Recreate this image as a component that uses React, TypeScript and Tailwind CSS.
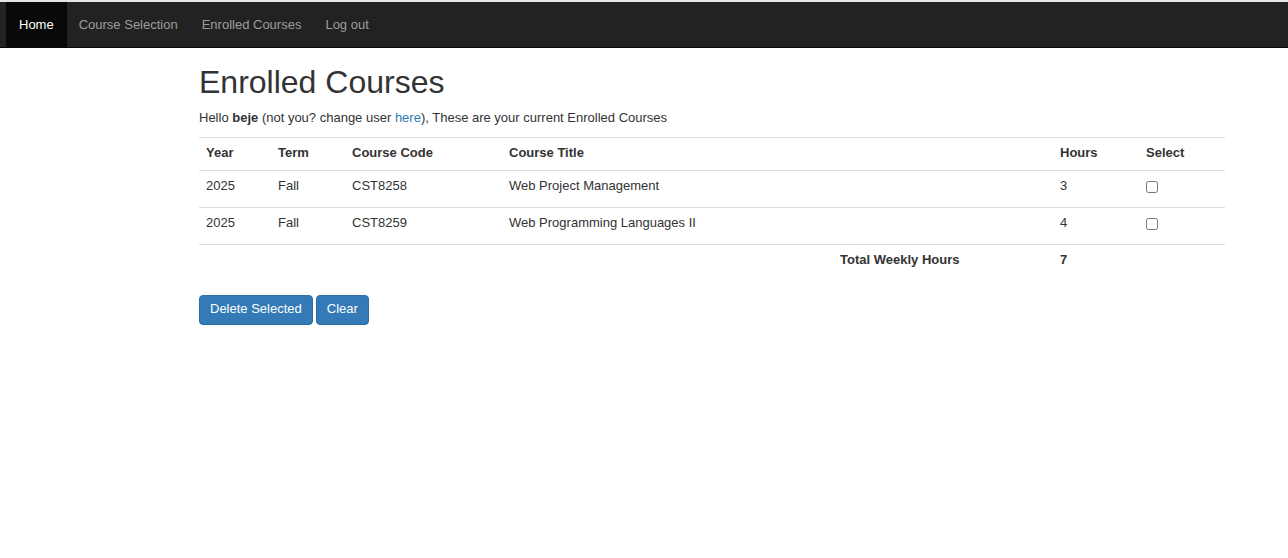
import { useState } from "react";

const links = ["Home", "Course Selection", "Enrolled Courses", "Log out"];

const courses = [
  { year: 2025, term: "Fall", code: "CST8258", title: "Web Project Management", hours: 3 },
  { year: 2025, term: "Fall", code: "CST8259", title: "Web Programming Languages II", hours: 4 },
];

const cell = "border-t border-[#dddddd] px-[7px] pt-[6px] align-top";
const button =
  "h-[30px] rounded-[4px] border border-[#2e6da4] bg-[#337ab7] px-[10px] pb-[2px] leading-[18px] text-white hover:bg-[#286090]";

export default function App() {
  const [selected, setSelected] = useState<string[]>([]);

  const toggle = (code: string) =>
    setSelected((prev) => (prev.includes(code) ? prev.filter((c) => c !== code) : [...prev, code]));

  const total = courses.reduce((sum, c) => sum + c.hours, 0);

  return (
    <div className="min-h-screen bg-white font-['Liberation_Sans',Arial,sans-serif] text-[13px] leading-[18px] text-[#333333]">
      <nav className="border-t-2 border-b border-t-[#e4e6e8] border-b-[#080808] bg-[#222222] px-[6px]">
        <ul className="flex">
          {links.map((label, i) => (
            <li key={label}>
              <a
                href="#"
                className={
                  i === 0
                    ? "block bg-[#080808] px-[13px] pt-[14px] pb-[13px] text-white"
                    : "block px-3 pt-[14px] pb-[13px] text-[#9d9d9d] hover:text-white"
                }
              >
                {label}
              </a>
            </li>
          ))}
        </ul>
      </nav>

      <main className="pt-4 pr-[63px] pl-[199px]">
        <h1 className="text-[32px] leading-9">Enrolled Courses</h1>
        <p className="mt-[9px]">
          Hello <b>beje</b> (not you? change user{" "}
          <a href="#" className="text-[#337ab7] hover:underline">
            here
          </a>
          ), These are your current Enrolled Courses
        </p>

        <table className="mt-[10px] w-full table-fixed border-separate border-spacing-0 text-left">
          <colgroup>
            <col className="w-[72px]" />
            <col className="w-[74px]" />
            <col className="w-[157px]" />
            <col className="w-[331px]" />
            <col className="w-[220px]" />
            <col className="w-[86px]" />
            <col className="w-[86px]" />
          </colgroup>
          <thead>
            <tr className="h-[33px]">
              <th className={cell}>Year</th>
              <th className={cell}>Term</th>
              <th className={cell}>Course Code</th>
              <th className={cell} colSpan={2}>
                Course Title
              </th>
              <th className={cell}>Hours</th>
              <th className={cell}>Select</th>
            </tr>
          </thead>
          <tbody>
            {courses.map((c) => (
              <tr key={c.code} className="h-[37px]">
                <td className={cell}>{c.year}</td>
                <td className={cell}>{c.term}</td>
                <td className={cell}>{c.code}</td>
                <td className={cell} colSpan={2}>
                  {c.title}
                </td>
                <td className={cell}>{c.hours}</td>
                <td className={cell}>
                  <input
                    type="checkbox"
                    aria-label={`Select ${c.code}`}
                    checked={selected.includes(c.code)}
                    onChange={() => toggle(c.code)}
                    className="mt-1 block size-3"
                  />
                </td>
              </tr>
            ))}
            <tr className="h-[33px] font-bold">
              <td className={cell} colSpan={4}></td>
              <td className={cell}>Total Weekly Hours</td>
              <td className={cell}>{total}</td>
              <td className={cell}></td>
            </tr>
          </tbody>
        </table>

        <div className="mt-[18px] flex gap-[3px]">
          <button type="button" className={button}>
            Delete Selected
          </button>
          <button type="button" className={button} onClick={() => setSelected([])}>
            Clear
          </button>
        </div>
      </main>
    </div>
  );
}
